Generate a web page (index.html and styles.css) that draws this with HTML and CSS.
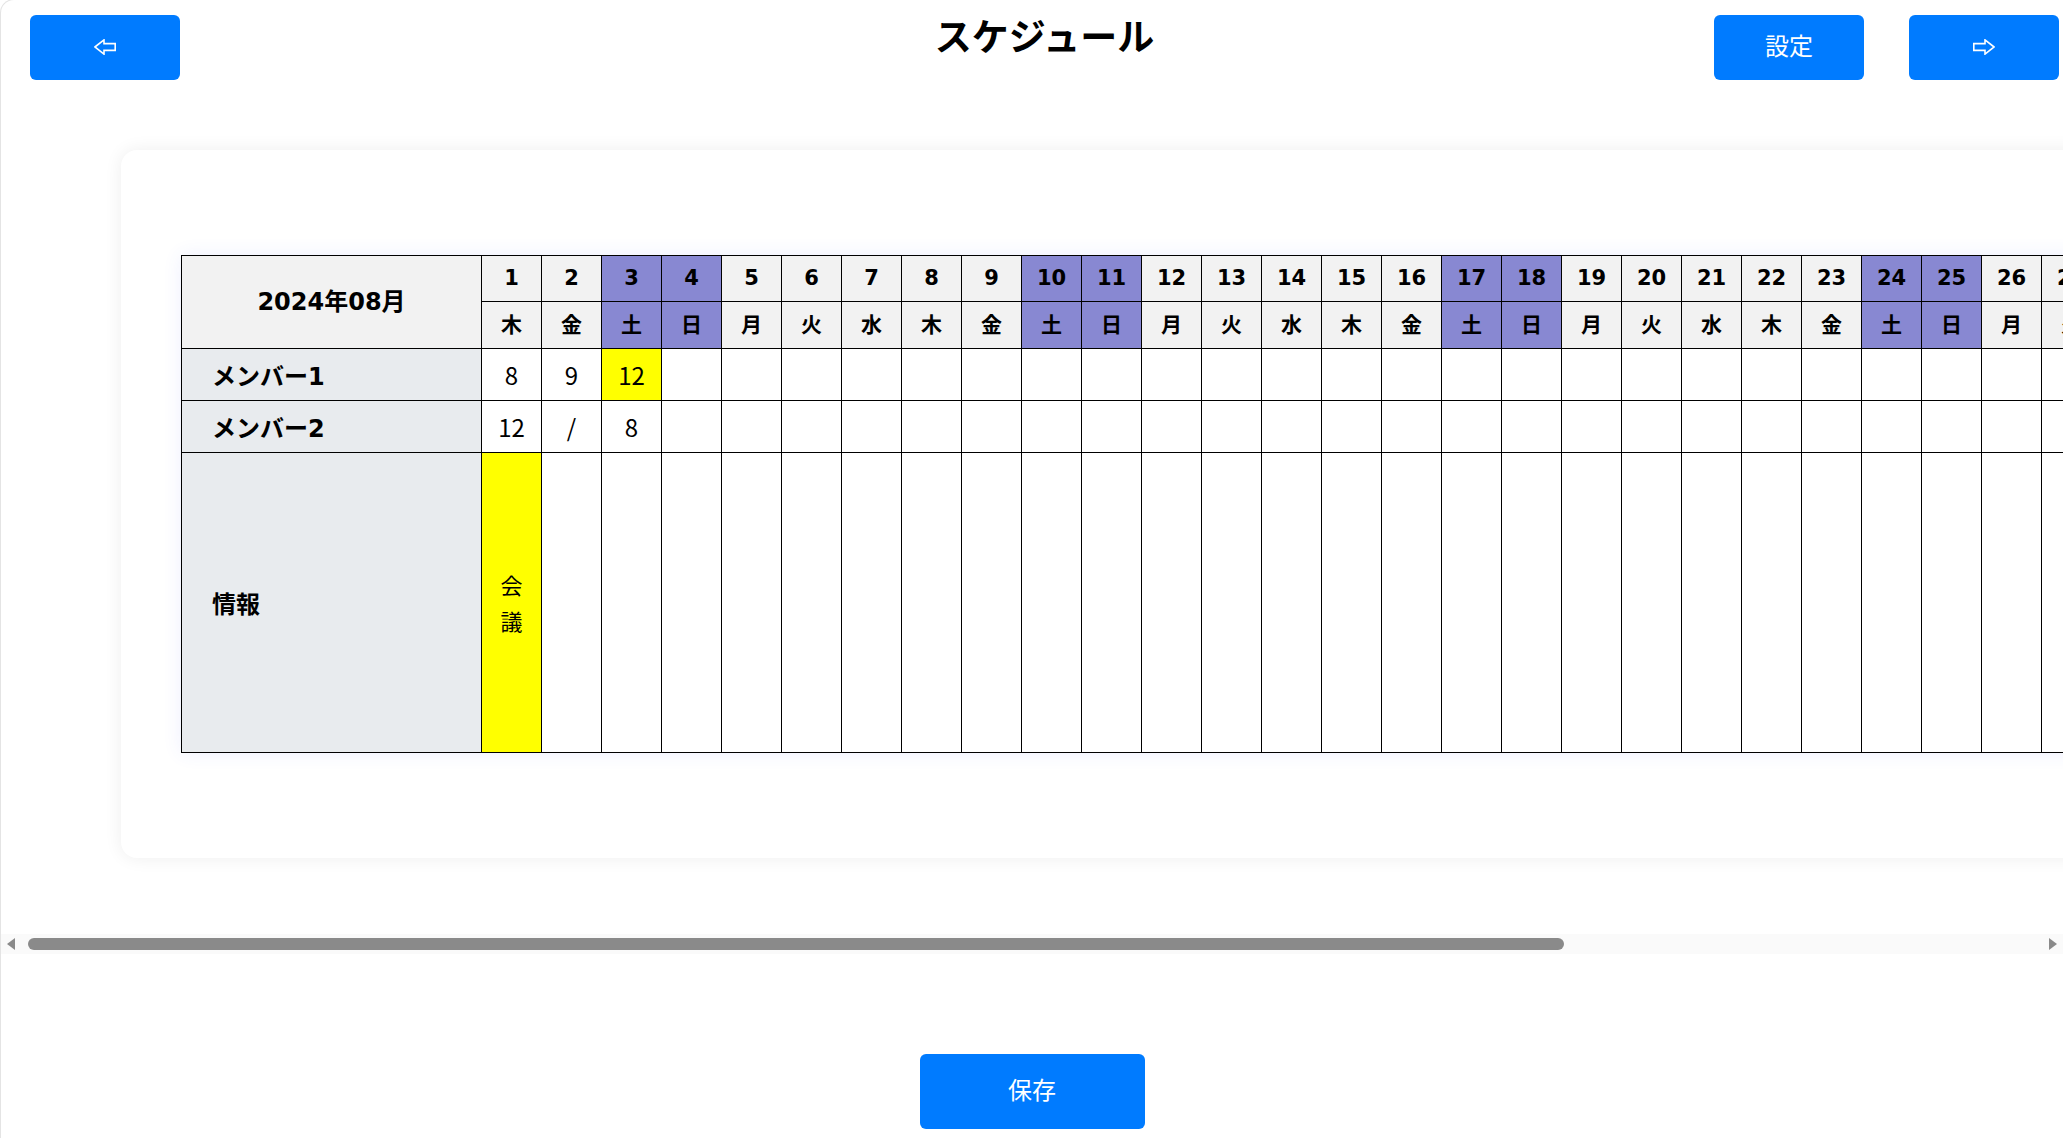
FILE: index.html
```html
<!DOCTYPE html>
<html lang="ja">
<head>
<meta charset="utf-8">
<title>スケジュール</title>
<link rel="stylesheet" href="styles.css">
</head>
<body>
<div class="app">
  <header class="topbar">
    <button class="btn btn-top btn-arrow" type="button" aria-label="前へ">
      <svg class="arrow-icon" width="22" height="16" viewBox="0 0 22 16"><polygon points="0.9,8 10,0.9 10,4.6 21.2,4.6 21.2,11.4 10,11.4 10,15.1"/></svg>
    </button>
    <h1 class="title">スケジュール</h1>
    <div class="top-actions">
      <button class="btn btn-top" type="button">設定</button>
      <button class="btn btn-top btn-arrow" type="button" aria-label="次へ">
        <svg class="arrow-icon" width="22" height="16" viewBox="0 0 22 16"><polygon points="21.1,8 12,0.9 12,4.6 0.8,4.6 0.8,11.4 12,11.4 12,15.1"/></svg>
      </button>
    </div>
  </header>

  <div class="scroller">
    <div class="card">
      <table class="schedule">
        <colgroup>
          <col class="col-label">
          <col class="col-day"><col class="col-day"><col class="col-day"><col class="col-day"><col class="col-day"><col class="col-day"><col class="col-day"><col class="col-day"><col class="col-day"><col class="col-day">
          <col class="col-day"><col class="col-day"><col class="col-day"><col class="col-day"><col class="col-day"><col class="col-day"><col class="col-day"><col class="col-day"><col class="col-day"><col class="col-day">
          <col class="col-day"><col class="col-day"><col class="col-day"><col class="col-day"><col class="col-day"><col class="col-day"><col class="col-day"><col class="col-day"><col class="col-day"><col class="col-day">
          <col class="col-day">
        </colgroup>
        <thead>
          <tr class="row-date">
            <th class="month" rowspan="2">2024年08月</th>
            <th>1</th><th>2</th><th class="weekend">3</th><th class="weekend">4</th><th>5</th><th>6</th><th>7</th><th>8</th><th>9</th><th class="weekend">10</th>
            <th class="weekend">11</th><th>12</th><th>13</th><th>14</th><th>15</th><th>16</th><th class="weekend">17</th><th class="weekend">18</th><th>19</th><th>20</th>
            <th>21</th><th>22</th><th>23</th><th class="weekend">24</th><th class="weekend">25</th><th>26</th><th>27</th><th>28</th><th>29</th><th>30</th>
            <th class="weekend">31</th>
          </tr>
          <tr class="row-dow">
            <th>木</th><th>金</th><th class="weekend">土</th><th class="weekend">日</th><th>月</th><th>火</th><th>水</th><th>木</th><th>金</th><th class="weekend">土</th>
            <th class="weekend">日</th><th>月</th><th>火</th><th>水</th><th>木</th><th>金</th><th class="weekend">土</th><th class="weekend">日</th><th>月</th><th>火</th>
            <th>水</th><th>木</th><th>金</th><th class="weekend">土</th><th class="weekend">日</th><th>月</th><th>火</th><th>水</th><th>木</th><th>金</th>
            <th class="weekend">土</th>
          </tr>
        </thead>
        <tbody>
          <tr class="row-member">
            <th class="label">メンバー1</th>
            <td>8</td><td>9</td><td class="mark">12</td><td></td><td></td><td></td><td></td><td></td><td></td><td></td>
            <td></td><td></td><td></td><td></td><td></td><td></td><td></td><td></td><td></td><td></td>
            <td></td><td></td><td></td><td></td><td></td><td></td><td></td><td></td><td></td><td></td>
            <td></td>
          </tr>
          <tr class="row-member">
            <th class="label">メンバー2</th>
            <td>12</td><td>/</td><td>8</td><td></td><td></td><td></td><td></td><td></td><td></td><td></td>
            <td></td><td></td><td></td><td></td><td></td><td></td><td></td><td></td><td></td><td></td>
            <td></td><td></td><td></td><td></td><td></td><td></td><td></td><td></td><td></td><td></td>
            <td></td>
          </tr>
          <tr class="row-info">
            <th class="label">情報</th>
            <td class="mark"><div class="memo">会議</div></td><td></td><td></td><td></td><td></td><td></td><td></td><td></td><td></td><td></td>
            <td></td><td></td><td></td><td></td><td></td><td></td><td></td><td></td><td></td><td></td>
            <td></td><td></td><td></td><td></td><td></td><td></td><td></td><td></td><td></td><td></td>
            <td></td>
          </tr>
        </tbody>
      </table>
    </div>
  </div>

  <div class="hscroll" aria-hidden="true">
    <span class="hs-arrow hs-left"></span>
    <div class="hs-track"><div class="hs-thumb" style="width: 76.4%"></div></div>
    <span class="hs-arrow hs-right"></span>
  </div>

  <div class="footer">
    <button class="btn btn-save" type="button">保存</button>
  </div>
</div>
</body>
</html>
```

FILE: styles.css
```css
* {
  box-sizing: border-box;
}

html, body {
  margin: 0;
  padding: 0;
  background: #ffffff;
}

body {
  font-family: "Noto Sans CJK JP", "DejaVu Sans", sans-serif;
  color: #000;
  overflow: hidden;
}

.app {
  min-height: 100vh;
  border-left: 1px solid #e4e4e4;
  border-top: 1px solid #e4e4e4;
  border-top-left-radius: 14px;
  margin-top: -1px;
}

/* ---------- header ---------- */
.topbar {
  display: grid;
  grid-template-columns: 1fr auto 1fr;
  align-items: start;
  padding: 15px 4px 0 29px;
}

.title {
  margin: -5px 0 0;
  font-size: 37px;
  font-weight: 700;
  line-height: 1.4;
  text-align: center;
}

.top-actions {
  justify-self: end;
  display: flex;
  gap: 45px;
}

.btn {
  border: none;
  border-radius: 6px;
  background: #007bff;
  color: #ffffff;
  font-family: "Noto Sans CJK JP", sans-serif;
  font-size: 24px;
  cursor: pointer;
  padding: 0 0 6px;
}

.btn-top {
  width: 150px;
  height: 65px;
}

.topbar > .btn-top {
  justify-self: start;
}

.btn-arrow {
  display: flex;
  align-items: center;
  justify-content: center;
  padding: 0 0 2px;
}

.arrow-icon {
  display: block;
}

.arrow-icon polygon {
  fill: none;
  stroke: #ffffff;
  stroke-width: 1.6;
  stroke-linejoin: miter;
}

/* ---------- scroll area + card ---------- */
.scroller {
  overflow: hidden;
  padding: 70px 300px 76px 120px;
}

.card {
  width: max-content;
  background: #ffffff;
  border-radius: 16px;
  padding: 105px 60px;
  box-shadow: 0 0 18px rgba(0, 0, 0, 0.07);
}

/* ---------- horizontal scrollbar ---------- */
.hscroll {
  display: flex;
  align-items: center;
  height: 20px;
  background: #fafafa;
}

.hs-arrow {
  flex: none;
  display: flex;
  align-items: center;
  height: 100%;
}

.hs-left {
  width: 27px;
  padding-left: 6px;
}

.hs-right {
  width: 24px;
  justify-content: flex-end;
  padding-right: 6px;
}

.hs-left::before,
.hs-right::before {
  content: "";
  width: 0;
  height: 0;
  border-top: 6px solid transparent;
  border-bottom: 6px solid transparent;
}

.hs-left::before {
  border-right: 8px solid #8a8a8a;
}

.hs-right::before {
  border-left: 8px solid #8a8a8a;
}

.hs-track {
  flex: 1;
  height: 12px;
}

.hs-thumb {
  height: 12px;
  border-radius: 6px;
  background: #8a8a8a;
}

/* ---------- table ---------- */
.schedule {
  border-collapse: collapse;
  table-layout: fixed;
  width: 2160px;
  box-shadow: 0 0 18px rgba(70, 90, 255, 0.09);
}

.col-label {
  width: 300px;
}

.col-day {
  width: 60px;
}

.schedule th,
.schedule td {
  border: 1px solid #000;
  padding: 0;
  text-align: center;
  vertical-align: middle;
}

.schedule thead th {
  background: #f2f2f2;
  font-family: "DejaVu Sans", "Noto Sans CJK JP", sans-serif;
  font-weight: 700;
  font-size: 21px;
  line-height: 1;
}

.schedule thead th.month {
  font-size: 24px;
}

.schedule thead th.weekend {
  background: #8888d2;
}

.row-date th {
  height: 46px;
}

.row-dow th {
  height: 47px;
}

.schedule .label {
  background: #e8ebee;
  text-align: left;
  padding-left: 30px;
  font-family: "DejaVu Sans", "Noto Sans CJK JP", sans-serif;
  font-weight: 700;
  font-size: 24px;
}

.row-member th,
.row-member td {
  height: 52px;
}

.schedule td {
  background: #ffffff;
  font-family: "Noto Sans CJK JP", sans-serif;
  font-weight: 400;
  font-size: 24px;
  line-height: 1;
}

.schedule td.mark {
  background: #ffff00;
}

.row-info th,
.row-info td {
  height: 300px;
}

.memo {
  width: 1em;
  margin: 0 auto;
  font-size: 22px;
  line-height: 1.6;
}

/* ---------- footer ---------- */
.footer {
  display: flex;
  justify-content: center;
  padding-top: 100px;
}

.btn-save {
  width: 225px;
  height: 75px;
}
```
